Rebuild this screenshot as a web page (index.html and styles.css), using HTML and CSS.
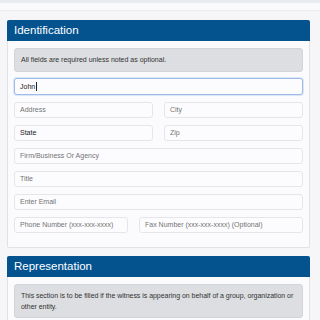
FILE: index.html
```html
<!DOCTYPE html>
<html>
<head>
<meta charset="utf-8">
<link rel="stylesheet" href="styles.css">
</head>
<body>
<div class="topstrip"></div>
<div class="subbar"></div>
<main class="page">
  <section class="card">
    <h2 class="card-head">Identification</h2>
    <div class="card-body">
      <div class="alert">All fields are required unless noted as optional.</div>
      <div class="field focus"><span class="val">John</span><span class="caret"></span></div>
      <div class="row half">
        <div class="field">Address</div>
        <div class="field">City</div>
      </div>
      <div class="row half">
        <div class="field"><span class="val">State</span></div>
        <div class="field">Zip</div>
      </div>
      <div class="field">Firm/Business Or Agency</div>
      <div class="field">Title</div>
      <div class="field">Enter Email</div>
      <div class="row split">
        <div class="field">Phone Number (xxx-xxx-xxxx)</div>
        <div class="field">Fax Number (xxx-xxx-xxxx) (Optional)</div>
      </div>
    </div>
  </section>
  <section class="card">
    <h2 class="card-head">Representation</h2>
    <div class="card-body">
      <div class="alert two">This section is to be filled if the witness is appearing on behalf of a group, organization or other entity.</div>
    </div>
  </section>
</main>
</body>
</html>
```
FILE: styles.css
```css
html, body {
  margin: 0;
  padding: 0;
}
body {
  background: #f6f6f8;
  font-family: "Liberation Sans", Arial, sans-serif;
  width: 320px;
  height: 320px;
  overflow: hidden;
}
.topstrip {
  height: 3px;
  background: #e7ecf3;
}
.subbar {
  height: 7px;
  background: #fafafc;
  border-bottom: 1px solid #ececef;
}
.page {
  padding: 9px 10px 0 7px;
  display: flex;
  flex-direction: column;
  gap: 8px;
}
.card {
  background: #fbfbfd;
  border: 1px solid #e2e2e6;
  border-top: none;
  border-radius: 2px;
}
.card-head {
  margin: 0 -1px;
  height: 21px;
  background: #04538f;
  color: #ffffff;
  font-weight: normal;
  font-size: 11.5px;
  line-height: 21px;
  padding-left: 7px;
  border-radius: 2px 2px 0 0;
}
.card-body {
  padding: 7px 6px 14px 6px;
  display: flex;
  flex-direction: column;
  gap: 7px;
}
.alert {
  background: #dcdee1;
  border: 1px solid #d2d4d7;
  border-radius: 3px;
  box-sizing: border-box;
  height: 24px;
  padding: 0 6px;
  font-size: 7px;
  line-height: 22px;
  color: #333;
  margin-bottom: -1px;
}
.alert.two {
  height: auto;
  line-height: 10.5px;
  padding: 6px 2px 5px 6px;
  letter-spacing: -0.03px;
}
.field {
  box-sizing: border-box;
  height: 16px;
  border: 1px solid #e6e6e9;
  border-radius: 3px;
  background: #fcfcfe;
  padding: 0 5px;
  font-size: 7px;
  line-height: 14px;
  color: #737373;
  white-space: nowrap;
  overflow: hidden;
}
.field.focus {
  height: 17px;
  line-height: 15px;
  border-color: #9dbbe6;
  box-shadow: 0 0 0 1px #dbe6f6;
  display: flex;
  align-items: center;
}
.val {
  color: #222;
}
.caret {
  display: inline-block;
  width: 1px;
  height: 9px;
  background: #222;
  margin-left: 0.5px;
}
.row {
  display: grid;
  column-gap: 11px;
}
.row.half {
  grid-template-columns: 1fr 1fr;
}
.row.split {
  grid-template-columns: 114fr 164fr;
}
```
